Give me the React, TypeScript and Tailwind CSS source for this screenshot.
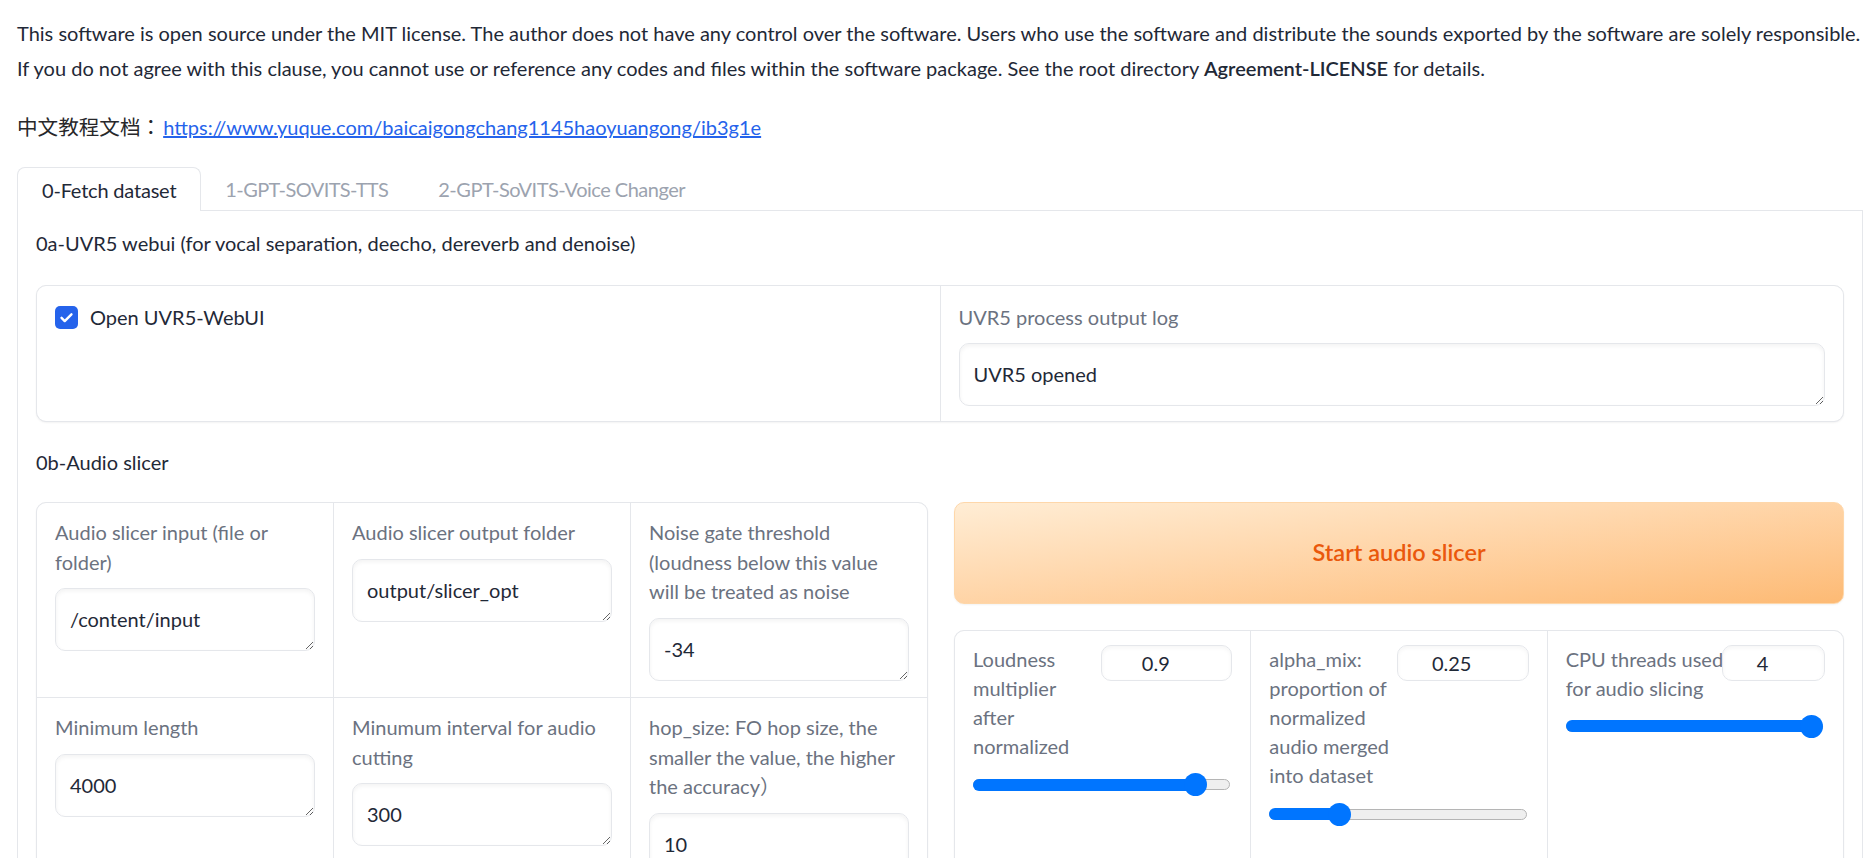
import React from "react";

function Area({ value, className = "" }: { value: string; className?: string }) {
  return (
    <textarea
      readOnly
      value={value}
      rows={1}
      className={
        "block w-full h-[63px] rounded-[10px] border border-[#e5e7eb] bg-white px-[14px] py-[15px] leading-[30px] text-[#1f2937] shadow-[inset_0_2px_4px_rgba(0,0,0,0.05)] outline-none overflow-hidden " +
        className
      }
    />
  );
}

function FieldCell({ label, value }: { label: string[]; value: string }) {
  return (
    <div className="bg-white px-[18px] pt-[15.5px] pb-[16px]">
      <div className="text-[#6b7280] leading-[29.5px] whitespace-nowrap">
        {label.map((l, i) => (
          <div key={i}>{l}</div>
        ))}
      </div>
      <Area value={value} className="mt-[11px]" />
    </div>
  );
}

function SliderCell({
  label,
  value,
  inputW,
  pct,
}: {
  label: string[];
  value: string;
  inputW: string;
  pct: number;
}) {
  return (
    <div className="bg-white px-[18px] pt-[14px] pb-[15px]">
      <div className="flex items-start">
        <div className="flex-1 min-w-0 text-[#6b7280] leading-[29.2px] whitespace-nowrap">
          {label.map((l, i) => (
            <div key={i}>{l}</div>
          ))}
        </div>
        <div
          className={
            "shrink-0 h-[36px] rounded-[10px] border border-[#e5e7eb] bg-white shadow-[inset_0_2px_4px_rgba(0,0,0,0.04)] flex items-center justify-center pr-[22px] text-[#1f2937] " +
            inputW
          }
        >
          {value}
        </div>
      </div>
      <div className="relative mt-[12px] h-[23px] mr-[2px]">
        <div className="absolute left-0 right-0 top-[6px] h-[11px] rounded-full bg-[#efefef] border border-[#b5b5b5]" />
        <div
          className="absolute left-0 top-[5.5px] h-[12px] rounded-full bg-[#0075ff]"
          style={{ width: `calc(${pct} * (100% - 23px) + 11.5px)` }}
        />
        <div
          className="absolute top-0 h-[23px] w-[23px] rounded-full bg-[#0075ff]"
          style={{ left: `calc(${pct} * (100% - 23px))` }}
        />
      </div>
    </div>
  );
}

export default function App() {
  return (
    <div className="min-h-screen bg-white font-[family-name:Lato,'Noto_Sans_CJK_SC',sans-serif] text-[20px] text-[#1f2937] pl-[17px] pr-[1px] pt-[16px] pb-[40px]">
      <div className="leading-[35px] whitespace-nowrap">
        <p>
          This software is open source under the MIT license. The author does not have any control over the software. Users who use the software and distribute the sounds exported by the software are solely responsible.
        </p>
        <p>
          If you do not agree with this clause, you cannot use or reference any codes and files within the software package. See the root directory{" "}
          <strong className="font-semibold">Agreement-LICENSE</strong> for details.
        </p>
        <p className="mt-[23px]">
          <span className="font-[family-name:'Noto_Sans_CJK_TC',sans-serif] font-normal text-[20.6px] text-[#27272a]">中文教程文档：</span>
          <a className="ml-[2px] text-[#2563eb] underline" href="#">
            https://www.yuque.com/baicaigongchang1145haoyuangong/ib3g1e
          </a>
        </p>
      </div>

      <div className="mt-[22px] flex h-[44px] border-b border-[#e5e7eb]">
        <div className="h-[44px] px-[24px] rounded-t-[8px] border border-b-0 border-[#e5e7eb] bg-white text-[#1f2937] flex items-center tracking-[-0.2px]">
          0-Fetch dataset
        </div>
        <div className="px-[24px] text-[#9ca3af] flex items-center tracking-[-0.6px]">1-GPT-SOVITS-TTS</div>
        <div className="px-[26px] text-[#9ca3af] flex items-center tracking-[-0.5px]">2-GPT-SoVITS-Voice Changer</div>
      </div>

      <div className="border border-t-0 border-[#e5e7eb] px-[18px] pt-[15px] pb-[24px] flex flex-col gap-[24px]">
        <div className="leading-[35px]">0a-UVR5 webui (for vocal separation, deecho, dereverb and denoise)</div>

        <div className="grid grid-cols-2 gap-px bg-[#e5e7eb] border border-[#e5e7eb] rounded-[10px] overflow-hidden shadow-[0_1px_2px_rgba(0,0,0,0.05)]">
          <div className="bg-white px-[18px] pt-[17px]">
            <div className="flex items-center gap-[12px] leading-[29.5px]">
              <span className="w-[23px] h-[23px] rounded-[5px] bg-[#2563eb] flex items-center justify-center">
                <svg viewBox="0 0 24 24" className="w-[17px] h-[17px]" fill="none">
                  <path d="M5 12.5l4.5 4.5L19 7.5" stroke="white" strokeWidth="3.4" strokeLinecap="round" strokeLinejoin="round" />
                </svg>
              </span>
              <span>Open UVR5-WebUI</span>
            </div>
          </div>
          <div className="bg-white px-[18px] pt-[17px] pb-[15px]">
            <div className="text-[#6b7280] leading-[29.5px]">UVR5 process output log</div>
            <Area value="UVR5 opened" className="mt-[10px] h-[62px]" />
          </div>
        </div>

        <div className="leading-[35px] -mt-[1px]">0b-Audio slicer</div>

        <div className="flex gap-[26px] items-stretch -mt-[2px]">
          <div className="flex-1 min-w-0 grid grid-cols-3 gap-px bg-[#e5e7eb] border border-[#e5e7eb] rounded-[10px] overflow-hidden shadow-[0_1px_2px_rgba(0,0,0,0.05)]">
            <FieldCell label={["Audio slicer input (file or", "folder)"]} value="/content/input" />
            <FieldCell label={["Audio slicer output folder"]} value="output/slicer_opt" />
            <FieldCell
              label={["Noise gate threshold", "(loudness below this value", "will be treated as noise"]}
              value="-34"
            />
            <FieldCell label={["Minimum length"]} value="4000" />
            <FieldCell label={["Minumum interval for audio", "cutting"]} value="300" />
            <FieldCell
              label={["hop_size: FO hop size, the", "smaller the value, the higher", "the accuracy）"]}
              value="10"
            />
          </div>

          <div className="flex-1 min-w-0 flex flex-col gap-[26px]">
            <button className="h-[102px] shrink-0 rounded-[10px] border border-[#fed7aa] bg-linear-to-br from-[#ffedd5] to-[#fdba74] text-[#ea580c] font-semibold text-[23.5px] shadow-[0_1px_2px_rgba(0,0,0,0.05)]">
              Start audio slicer
            </button>
            <div className="flex-1 grid grid-cols-3 gap-px bg-[#e5e7eb] border border-[#e5e7eb] rounded-[10px] overflow-hidden shadow-[0_1px_2px_rgba(0,0,0,0.05)]">
              <SliderCell
                label={["Loudness", "multiplier", "after", "normalized"]}
                value="0.9"
                inputW="w-[131px]"
                pct={0.9}
              />
              <SliderCell
                label={["alpha_mix:", "proportion of", "normalized", "audio merged", "into dataset"]}
                value="0.25"
                inputW="w-[132px]"
                pct={0.25}
              />
              <SliderCell
                label={["CPU threads used", "for audio slicing"]}
                value="4"
                inputW="w-[103px]"
                pct={1}
              />
            </div>
          </div>
        </div>
      </div>
    </div>
  );
}
